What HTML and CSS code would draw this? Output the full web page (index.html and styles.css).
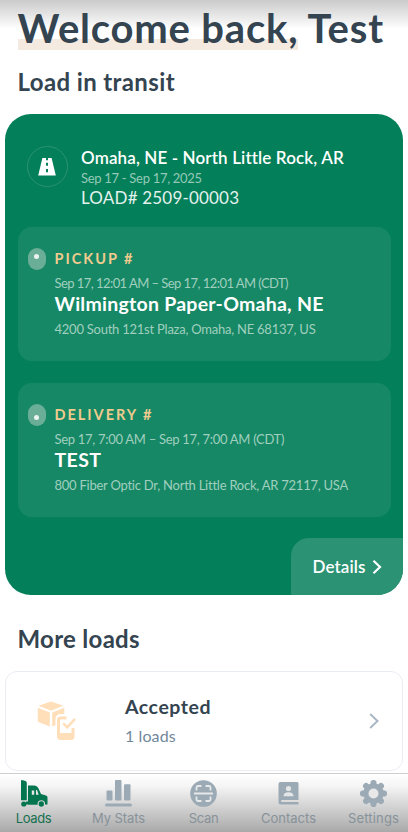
FILE: index.html
```
<!DOCTYPE html>
<html lang="en">
<head>
<meta charset="utf-8">
<meta name="viewport" content="width=device-width, initial-scale=1">
<title>Loads</title>
<link rel="stylesheet" href="styles.css">
</head>
<body>
<div class="screen">
  <main class="content">
    <h1 class="welcome"><span class="mark">Welcome back,</span> Test</h1>
    <h2 class="heading">Load in transit</h2>

    <section class="transit">
      <header class="transit-head">
        <div class="road">
          <svg width="18" height="18" viewBox="0 0 18 18"><path fill="#fff" d="M4.400 0H13.600L17.800 17.500H.2z"/><path stroke="#037f59" stroke-width="2" d="M9 0v2.200M9 4.800v3M9 11v3.200"/></svg>
        </div>
        <div>
          <p class="route">Omaha, NE - North Little Rock, AR</p>
          <p class="dates">Sep 17 - Sep 17, 2025</p>
          <p class="number">LOAD# 2509-00003</p>
        </div>
      </header>

      <article class="stop">
        <span class="pill pill-up"></span>
        <div>
          <h3 class="label">PICKUP #</h3>
          <p class="time time-pickup">Sep 17, 12:01 AM – Sep 17, 12:01 AM (CDT)</p>
          <p class="place">Wilmington Paper-Omaha, NE</p>
          <p class="address">4200 South 121st Plaza, Omaha, NE 68137, US</p>
        </div>
      </article>

      <article class="stop">
        <span class="pill pill-down"></span>
        <div>
          <h3 class="label">DELIVERY #</h3>
          <p class="time">Sep 17, 7:00 AM – Sep 17, 7:00 AM (CDT)</p>
          <p class="place place-short">TEST</p>
          <p class="address">800 Fiber Optic Dr, North Little Rock, AR 72117, USA</p>
        </div>
      </article>

      <a class="details">Details
        <svg width="10" height="14" viewBox="0 0 10 14"><path d="M1.500 .8 8 7l-6.500 6.200" fill="none" stroke="#fff" stroke-width="2.200"/></svg>
      </a>
    </section>

    <h2 class="heading more">More loads</h2>

    <section class="accepted">
      <svg class="box" width="40" height="40" viewBox="0 0 40 40" fill="#ffdfba">
        <path d="M14 .5 26.300 4.800 14 9.800 1.500 4.800z"/>
        <path d="M.8 6.700 12.800 11.500V25.500L2 21.300Q.8 20.800.8 19.500z"/>
        <path d="M15.200 11.500 27.300 6.700V13H24Q18.500 13 18.500 18.500V24.300L15.200 25.500z"/>
        <path d="M29.500 17H23.500Q21.500 17 21.500 19V35.500Q21.500 37.500 23.500 37.500H34Q36 37.500 36 35.500V27" fill="none" stroke="#ffdfba" stroke-width="3"/>
        <path d="M21 32h15v6H21z"/>
        <path d="M26.300 22.300 30.200 26.400 38 17.800" fill="none" stroke="#ffdfba" stroke-width="2.500"/>
      </svg>
      <div class="accepted-text">
        <h3>Accepted</h3>
        <p>1 loads</p>
      </div>
      <svg class="chevron" width="10" height="16" viewBox="0 0 10 16"><path d="M1.200 1 8.500 8l-7.300 7" fill="none" stroke="#a9b8c4" stroke-width="2"/></svg>
    </section>
  </main>

  <nav class="tabs">
    <a class="tab active">
      <svg width="28" height="27" viewBox="0 0 28 27"><g fill="#04764f"><path d="M1 1Q1 0 2 0L5.500 1Q6.800 1.400 6.800 3V20.300H1z"/><path d="M8 5.500H14Q17 5.500 18.500 8.500L21 14 26 15.500Q27.500 16 27.500 17.500V24.500H8z"/><path d="M6 21.500H20V24.500H6z"/><circle cx="3.800" cy="24" r="2.600"/></g><path fill="#e6e8e7" d="M11.800 10.500h2.400v4.200h-2.400zM16 10h1l1.700 4.700H16z"/><circle cx="21.300" cy="24" r="3.200" fill="#04764f" stroke="#d5d5d5" stroke-width="1.100"/></svg>
      <span class="t-loads">Loads</span>
    </a>
    <a class="tab">
      <svg width="27" height="27" viewBox="0 0 27 27" fill="#9caab5"><rect x="1.500" y="10.500" width="6" height="10" rx="1"/><rect x="10" y="0" width="6.500" height="20.500" rx="1"/><rect x="19" y="4.300" width="6.500" height="16.200" rx="1"/><rect x="0" y="23.500" width="27" height="3" rx="1.500"/></svg>
      <span class="t-stats">My Stats</span>
    </a>
    <a class="tab">
      <svg width="27" height="27" viewBox="0 0 27 27"><circle cx="13.500" cy="13.500" r="13.300" fill="#9caab5"/><path d="M6.500 10.500V7.500Q6.500 6 8 6H11.500M15.500 6H19Q20.500 6 20.500 7.500V10.500M6.500 16.500V19.500Q6.500 21 8 21H11.500M15.500 21H19Q20.500 21 20.500 19.500V16.500M4 13.500H23" fill="none" stroke="#e6e8ea" stroke-width="1.800"/></svg>
      <span class="t-scan">Scan</span>
    </a>
    <a class="tab">
      <svg width="21" height="27" viewBox="0 0 21 27"><path d="M2.500 2H19Q20.500 2 20.500 3.500V20H4Q3 20 3 21T4 22H20.500V24.500H3Q.5 24.500.5 22V4Q.5 2 2.500 2z" fill="#9caab5"/><g fill="#e3e5e6"><circle cx="10.500" cy="8.500" r="2.600"/><path d="M5.500 16.200Q5.500 12.300 10.500 12.300T15.500 16.200z"/></g></svg>
      <span class="t-contacts">Contacts</span>
    </a>
    <a class="tab">
      <svg width="27" height="27" viewBox="0 0 27 27"><g fill="#9caab5"><g id="t"><rect x="10.500" y="0" width="6" height="27" rx="2.800"/><rect x="0" y="10.500" width="27" height="6" rx="2.800"/></g><use href="#t" transform="rotate(45 13.500 13.500)"/><circle cx="13.500" cy="13.500" r="10.300"/></g><circle cx="13.500" cy="13.500" r="5" fill="#e8e8e8"/></svg>
      <span class="t-settings">Settings</span>
    </a>
  </nav>
</div>
</body>
</html>
```
FILE: styles.css
```
* { box-sizing: border-box; }
body, h1, h2, h3, p { margin: 0; }
body { background: #fff; font-family: Lato, "Liberation Sans", sans-serif; color: #344450; }
.screen {
  width: 408px; height: 832px; overflow: hidden;
  display: flex; flex-direction: column; white-space: nowrap;
  background: linear-gradient(#cbcbcb, #e2e2e2 13px, #fff 29px);
}
.content { height: 773px; padding: 5px 5px 0; }
svg { display: block; flex: none; }

.welcome { margin-left: 12.500px; font-size: 40px; line-height: 46px; letter-spacing: .8px; }
.mark { background: linear-gradient(#f5eadf, #f5eadf) 0 34px / 100% 11px no-repeat; display: inline-block; height: 46px; }
.heading { margin: 17px 0 0 12.500px; font-size: 24px; line-height: 28px; letter-spacing: .38px; }

.transit {
  height: 481px; margin-top: 18px; padding: 31px 12.500px 0;
  display: flex; flex-direction: column;
  background: #037f59; border-radius: 26px; overflow: hidden; color: #fff;
}
.transit-head { display: flex; height: 82px; padding: 1px 0 0 9px; }
.road {
  width: 41px; height: 41px; margin: 0 13.500px 0 0;
  border: 1px solid #2b9272; border-radius: 50%;
  display: flex; align-items: center; justify-content: center;
}
.route { font-size: 17px; font-weight: 600; line-height: 24px; letter-spacing: .13px; }
.dates { font-size: 13px; line-height: 16px; letter-spacing: -.3px; color: #94c9b8; }
.number { font-size: 17px; line-height: 23px; letter-spacing: .19px; color: #e3f2ed; }

.stop {
  height: 134px; margin-bottom: 21.500px; padding: 21px 10px 0; flex: none;
  display: flex; gap: 9px;
  background: #168865; border-radius: 14px;
}
.pill { width: 18px; height: 22px; border-radius: 9px; background: #6aae98; display: flex; justify-content: center; }
.pill::before { content: ""; width: 5px; height: 5px; margin-top: 6px; border-radius: 50%; background: #edf3f1; }
.pill-down::before { margin-top: 11px; }
.label { font-size: 14.500px; line-height: 22px; letter-spacing: 1.980px; color: #f0cb8f; }
.time { margin-top: 3px; font-size: 13px; line-height: 20px; letter-spacing: -.29px; color: #a0cfbf; }
.time-pickup { letter-spacing: -.55px; }
.place { margin-top: -1px; font-size: 19.500px; font-weight: 700; line-height: 23px; letter-spacing: .25px; }
.place-short { letter-spacing: .4px; }
.address { margin-top: 4px; font-size: 13px; line-height: 20px; letter-spacing: -.24px; color: #a0cfbf; }
.details {
  align-self: flex-end; flex: none; margin-right: -12.500px;
  width: 112.500px; height: 57px; padding-left: 22px;
  display: flex; align-items: center; gap: 6px;
  background: #2b9273; border-radius: 18px 0 0 0;
  font-size: 17px; font-weight: 600; letter-spacing: .12px;
}

.heading.more { margin-top: 30px; letter-spacing: .29px; }
.accepted {
  height: 100px; margin-top: 18px; padding: 0 23px 0 31px;
  display: flex; align-items: center;
  background: #fff; border: 1px solid #e9edf3; border-radius: 12px;
}
.accepted-text { flex: 1; margin: 2px 0 0 48px; }
.accepted-text h3 { font-size: 19.500px; line-height: 28px; letter-spacing: .55px; }
.accepted-text p { font-size: 16px; line-height: 30px; letter-spacing: .1px; color: #72879a; }

.tabs {
  height: 59px; padding-top: 6px; border-top: 1px solid #cfcfcf;
  display: grid; grid-template-columns: repeat(5, 85px); margin-left: -9px;
  background: linear-gradient(#fff, #f5f5f5 12px, #a9a9a9);
  font-family: Inter, "Liberation Sans", sans-serif; font-size: 13px; color: #87929a;
}
.tab { display: flex; flex-direction: column; align-items: center; }
.tab span { margin-top: 3px; line-height: 16px; }
.active { color: #16704f; }
.t-loads { letter-spacing: -.35px; }
.t-stats { letter-spacing: -.1px; }
.t-scan { letter-spacing: -.29px; }
.t-settings { letter-spacing: .17px; }
```
